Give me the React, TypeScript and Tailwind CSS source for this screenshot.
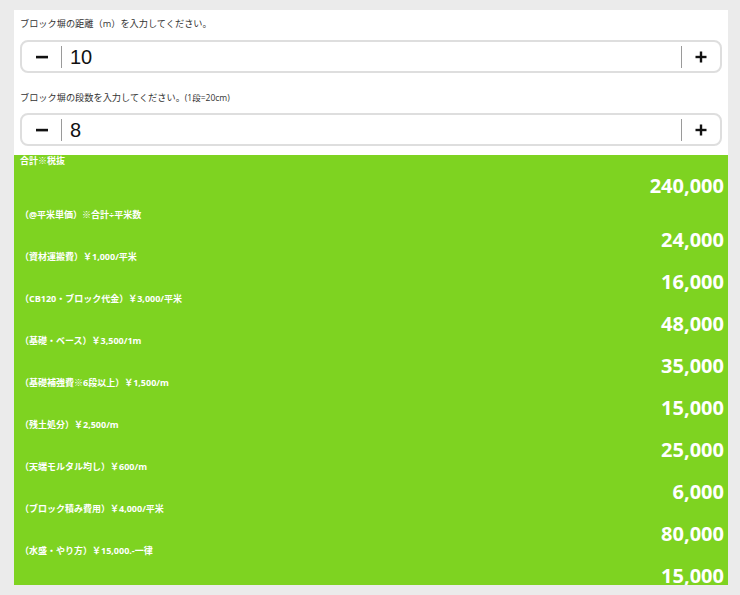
import { useState } from "react";

const jp = "font-['Open_Sans','Noto_Sans_CJK_JP',sans-serif]";

type Row = { label: string; value: number };

const Stepper = ({
  value,
  onChange,
}: {
  value: number;
  onChange: (v: number) => void;
}) => {
  return (
    <div className="flex h-[33px] items-center rounded-[8px] border-2 border-[#dedede] bg-white">
      <button
        className="flex h-full w-[39px] items-center justify-center"
        onClick={() => onChange(Math.max(0, value - 1))}
      >
        <svg width="12" height="12" viewBox="0 0 12 12">
          <rect x="0" y="4.8" width="12" height="2.6" fill="#111" />
        </svg>
      </button>
      <div className="h-[22px] w-px bg-[#9a9a9a]" />
      <div className="flex-1 pl-[8px] font-['Liberation_Sans',Arial,sans-serif] text-[20px] leading-none text-[#111]">
        {value}
      </div>
      <div className="h-[22px] w-px bg-[#9a9a9a]" />
      <button
        className="flex h-full w-[38px] items-center justify-center"
        onClick={() => onChange(value + 1)}
      >
        <svg width="12" height="12" viewBox="0 0 12 12">
          <rect x="0.5" y="4.8" width="11" height="2.4" fill="#111" />
          <rect x="4.8" y="0.5" width="2.4" height="11" fill="#111" />
        </svg>
      </button>
    </div>
  );
};

const rows: Row[] = [
  { label: "（@平米単価）※合計÷平米数", value: 24000 },
  { label: "（資材運搬費）￥1,000/平米", value: 16000 },
  { label: "（CB120・ブロック代金）￥3,000/平米", value: 48000 },
  { label: "（基礎・ベース）￥3,500/1m", value: 35000 },
  { label: "（基礎補強費※6段以上）￥1,500/m", value: 15000 },
  { label: "（残土処分）￥2,500/m", value: 25000 },
  { label: "（天端モルタル均し）￥600/m", value: 6000 },
  { label: "（ブロック積み費用）￥4,000/平米", value: 80000 },
  { label: "（水盛・やり方）￥15,000.-一律", value: 15000 },
];

export default function App() {
  const [meters, setMeters] = useState(10);
  const [steps, setSteps] = useState(8);

  const total = rows.slice(1).reduce((s, r) => s + r.value, 0);
  const fmt = (n: number) => n.toLocaleString("en-US");

  return (
    <div className={`min-h-[595px] bg-[#ebebeb] pl-[14px] pt-[10px] ${jp}`}>
      <div className="w-[714px]">
        {/* inputs */}
        <div className="bg-white px-[6px] pt-[8px] pb-[9px]">
          <p className="mb-[10px] text-[9.2px] leading-[12px] text-[#333]">
            ブロック塀の距離（m）を入力してください。
          </p>
          <Stepper value={meters} onChange={setMeters} />
          <p className="mt-[19px] mb-[9px] text-[9.2px] leading-[12px] text-[#333]">
            ブロック塀の段数を入力してください。
            <span className="text-[8.5px]">(1段=20cm)</span>
          </p>
          <Stepper value={steps} onChange={setSteps} />
        </div>

        {/* results */}
        <div className="h-[430px] overflow-hidden bg-[#7ed321] pl-[6px] pr-[4px] text-white">
          <p className="text-[9px] font-bold leading-[12px]">合計※税抜</p>
          <p className="mt-[8px] mb-[12px] text-right text-[20px] font-bold leading-[22px]">
            {fmt(total)}
          </p>
          {rows.map((r) => (
            <div key={r.label}>
              <p className="text-[9px] font-bold leading-[12px]">{r.label}</p>
              <p className="mt-[8px] text-right text-[20px] font-bold leading-[22px]">
                {fmt(r.value)}
              </p>
            </div>
          ))}
        </div>
      </div>
    </div>
  );
}
